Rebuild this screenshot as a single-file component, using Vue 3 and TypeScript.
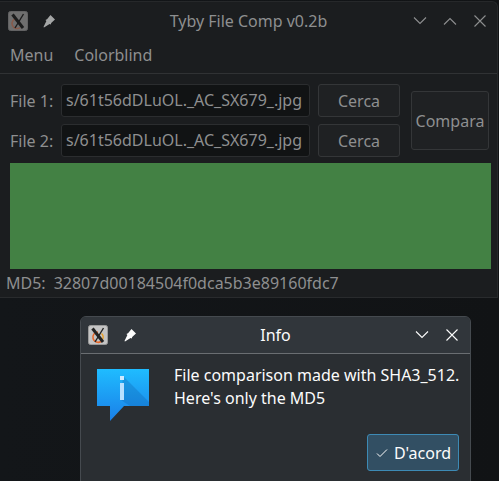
<script setup lang="ts">
const files = ["File 1:", "File 2:"];
const path = "s/61t56dDLuOL._AC_SX679_.jpg";
const pin = "M8.5 1L13 5.5 9.2 9 8.8 10.6 7.6 10 2 13.5 1.5 13 4.4 7 3.4 6 5 5.2z";
</script>

<template>
  <div class="desktop">
    <section class="window">
      <header class="titlebar">
        <svg class="app-icon" viewBox="0 0 20 20">
          <rect x="0.5" y="0.5" width="19" height="19" rx="2" fill="#7e7e7e" stroke="#6f6f6f" />
          <path d="M9 7.5a5 5 0 1 0 3 9" fill="none" stroke="#9c6552" stroke-width="1.5" />
          <path d="M4.5 3.5L15 17" fill="none" stroke="#1d1d1d" stroke-width="3" />
          <path d="M15.5 3L7 17" fill="none" stroke="#1d1d1d" stroke-width="1.4" />
        </svg>
        <svg class="pin" viewBox="0 0 14 14">
          <path :d="pin" fill="#bdbebe" />
        </svg>
        <span class="title">Tyby File Comp v0.2b</span>
        <div class="controls">
          <svg viewBox="0 0 14 14"><path d="M1 3.5l6 6 6-6" /></svg>
          <svg viewBox="0 0 14 14"><path d="M1 10.5l6-6 6 6" /></svg>
          <svg viewBox="0 0 14 14"><path d="M1.5 1.5l11 11M12.5 1.5l-11 11" /></svg>
        </div>
      </header>
      <nav class="menubar">
        <span>Menu</span>
        <span>Colorblind</span>
      </nav>
      <main class="content">
        <div class="form">
          <div class="rows">
            <div v-for="label in files" :key="label" class="row">
              <label>{{ label }}</label>
              <div class="input">{{ path }}</div>
              <button class="btn search">Cerca</button>
            </div>
          </div>
          <button class="btn compare">Compara</button>
        </div>
        <div class="result"></div>
      </main>
      <footer class="status">
        <span>MD5:</span>
        <span>32807d00184504f0dca5b3e89160fdc7</span>
      </footer>
    </section>

    <section class="dialog">
      <header class="dialog-bar">
        <svg class="app-icon" viewBox="0 0 20 20">
          <rect x="0.5" y="0.5" width="19" height="19" rx="2" fill="#c4c4c4" stroke="#9a9a9a" />
          <path d="M10 7a5.2 5.2 0 1 0 3 9.5" fill="none" stroke="#e8682a" stroke-width="1.6" />
          <path d="M13.5 8.5a5 5 0 0 1 1 6" fill="none" stroke="#e8a02a" stroke-width="1.4" />
          <path d="M4.5 3.5L15 17" fill="none" stroke="#222" stroke-width="3" />
          <path d="M15.5 3L7 17" fill="none" stroke="#222" stroke-width="1.4" />
        </svg>
        <svg class="pin" viewBox="0 0 14 14">
          <path :d="pin" fill="#fcfcfc" />
        </svg>
        <span class="title">Info</span>
        <div class="controls">
          <svg viewBox="0 0 14 14"><path d="M1 3.5l6 6 6-6" /></svg>
          <svg viewBox="0 0 14 14"><path d="M1.5 1.5l11 11M12.5 1.5l-11 11" /></svg>
        </div>
      </header>
      <div class="dialog-body">
        <svg class="info" viewBox="0 0 52 52">
          <defs>
            <linearGradient id="bubble" x1="0" y1="0" x2="0" y2="1">
              <stop offset="0" stop-color="#1fbcff" />
              <stop offset="1" stop-color="#1a7fe8" />
            </linearGradient>
          </defs>
          <path d="M0 0h52v37H27L13 52V37H0z" fill="url(#bubble)" />
          <path d="M26 7l26 26v4H33L24 31z" fill="#0c5fa8" opacity="0.3" />
          <rect x="23" y="7" width="4" height="4" fill="#cfeaff" />
          <rect x="23" y="14" width="4" height="17" fill="#b8e0ff" />
        </svg>
        <p>File comparison made with SHA3_512.<br />Here's only the MD5</p>
      </div>
      <div class="dialog-actions">
        <button class="btn ok">
          <svg viewBox="0 0 12 12"><path d="M1 6.5l3 3 7-7" /></svg>
          D'acord
        </button>
      </div>
    </section>
  </div>
</template>

<style>
html,
body {
  margin: 0;
  background: #131517;
}
</style>

<style scoped>
.desktop {
  position: relative;
  width: 499px;
  height: 481px;
  overflow: hidden;
  background: linear-gradient(90deg, #131619, #111315);
  font-family: "Noto Sans", sans-serif;
  font-size: 16px;
  color: #8e8f90;
}

.window {
  box-sizing: border-box;
  width: 498px;
  height: 297px;
  margin-top: 1px;
  background: #1b1d1f;
  border-top: 1px solid #26282a;
  border-right: 1px solid #26282a;
  border-bottom: 1px solid #292b2d;
  border-radius: 0 6px 0 0;
  display: flex;
  flex-direction: column;
}

.titlebar {
  height: 38px;
  flex: none;
  display: flex;
  align-items: center;
  padding: 0 8px;
  position: relative;
}

.app-icon {
  width: 20px;
  height: 20px;
  opacity: 0.85;
}

.pin {
  width: 14px;
  height: 14px;
  margin-left: 14px;
  opacity: 0.85;
}

.title {
  position: absolute;
  left: 0;
  right: 0;
  text-align: center;
  pointer-events: none;
}

.controls {
  margin-left: auto;
  display: flex;
  gap: 16px;
  padding-right: 2px;
}

.controls svg {
  width: 14px;
  height: 14px;
  fill: none;
  stroke: #8e8f90;
  stroke-width: 1.1;
}

.menubar {
  height: 34px;
  flex: none;
  box-sizing: border-box;
  display: flex;
  align-items: center;
  gap: 21px;
  padding: 0 10px 3px;
  border-bottom: 1px solid #303234;
}

.content {
  flex: 1;
  padding: 10px 7px 0 10px;
  display: flex;
  flex-direction: column;
  gap: 6px;
}

.form {
  display: flex;
  align-items: center;
  gap: 11px;
  padding-right: 1px;
}

.rows {
  display: flex;
  flex-direction: column;
  gap: 7px;
}

.row {
  display: flex;
  align-items: center;
  gap: 8px;
}

.row label {
  width: 43px;
  white-space: nowrap;
}

.input {
  box-sizing: border-box;
  width: 249px;
  height: 33px;
  line-height: 31px;
  padding: 0 4px;
  background: #111314;
  border: 1px solid #2b2d2f;
  border-radius: 3px;
  white-space: nowrap;
  overflow: hidden;
}

.btn {
  box-sizing: border-box;
  margin: 0;
  padding: 0;
  font: inherit;
  color: inherit;
  background: #1f2123;
  border: 1px solid #343638;
  border-radius: 3px;
}

.search {
  width: 82px;
  height: 33px;
}

.compare {
  width: 79px;
  height: 59px;
}

.result {
  width: 481px;
  height: 106px;
  flex: none;
  background: #438144;
}

.status {
  flex: 1;
  display: flex;
  align-items: center;
  gap: 8px;
  padding-left: 6px;
}

.dialog {
  position: absolute;
  left: 80px;
  top: 316px;
  width: 391px;
  height: 180px;
  box-sizing: border-box;
  background: #2a2e32;
  border: 1px solid #454a4f;
  border-radius: 6px 6px 0 0;
  color: #fcfcfc;
}

.dialog-bar {
  position: relative;
  height: 36px;
  display: flex;
  align-items: center;
  padding: 0 7px;
  background: #31363b;
  border-bottom: 1px solid #6a6e72;
  border-radius: 5px 5px 0 0;
}

.dialog-bar .app-icon,
.dialog-bar .pin {
  opacity: 1;
}

.dialog-bar .pin {
  margin-left: 15px;
}

.dialog-bar .controls {
  gap: 16px;
  padding-right: 4px;
}

.dialog-bar .controls svg {
  stroke: #fcfcfc;
}

.dialog-body {
  display: flex;
  gap: 26px;
  padding: 15px 0 0 16px;
}

.info {
  width: 52px;
  height: 52px;
  flex: none;
}

.dialog-body p {
  margin: 0;
  line-height: 23px;
  white-space: nowrap;
  position: relative;
  top: -5px;
  left: -1px;
}

.dialog-actions {
  display: flex;
  justify-content: flex-end;
  padding: 13px 11px 0 0;
}

.ok {
  width: 92px;
  height: 37px;
  padding-left: 1px;
  display: flex;
  align-items: center;
  justify-content: center;
  gap: 6px;
  background: #324f63;
  border-color: #3d8ab5;
  color: #fcfcfc;
}

.ok svg {
  width: 12px;
  height: 12px;
  fill: none;
  stroke: #fcfcfc;
  stroke-width: 1;
}
</style>
